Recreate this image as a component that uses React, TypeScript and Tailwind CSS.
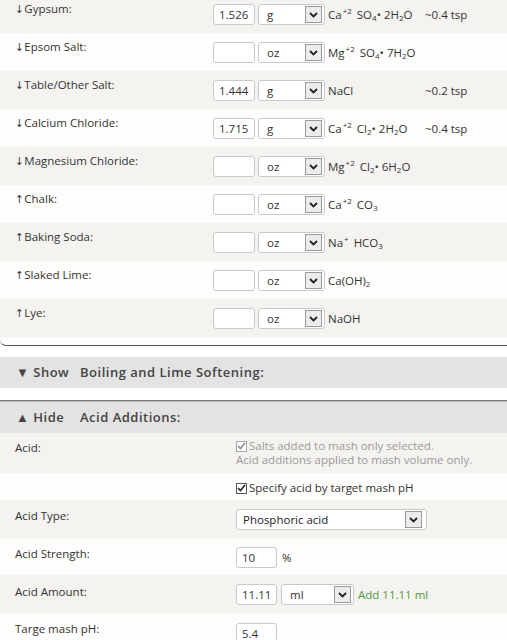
import React from "react";

const font = { fontFamily: '"Open Sans", "Liberation Sans", sans-serif' };

type Salt = {
  dir: string;
  name: string;
  amount: string;
  unit: string;
  formula: React.ReactNode;
  tsp?: string;
};

const Sup = ({ children }) => (
  <sup className="relative -top-[5px] ml-[1px] mr-[2px] text-[8px]">{children}</sup>
);
const Sub = ({ children }) => <sub className="relative top-[2px] align-baseline text-[8px]">{children}</sub>;

const salts: Salt[] = [
  { dir: "↓", name: "Gypsum:", amount: "1.526", unit: "g", formula: <>Ca<Sup>+2</Sup> SO<Sub>4</Sub>• 2H<Sub>2</Sub>O</>, tsp: "~0.4 tsp" },
  { dir: "↓", name: "Epsom Salt:", amount: "", unit: "oz", formula: <>Mg<Sup>+2</Sup> SO<Sub>4</Sub>• 7H<Sub>2</Sub>O</> },
  { dir: "↓", name: "Table/Other Salt:", amount: "1.444", unit: "g", formula: <>NaCl</>, tsp: "~0.2 tsp" },
  { dir: "↓", name: "Calcium Chloride:", amount: "1.715", unit: "g", formula: <>Ca<Sup>+2</Sup> Cl<Sub>2</Sub>• 2H<Sub>2</Sub>O</>, tsp: "~0.4 tsp" },
  { dir: "↓", name: "Magnesium Chloride:", amount: "", unit: "oz", formula: <>Mg<Sup>+2</Sup> Cl<Sub>2</Sub>• 6H<Sub>2</Sub>O</> },
  { dir: "↑", name: "Chalk:", amount: "", unit: "oz", formula: <>Ca<Sup>+2</Sup> CO<Sub>3</Sub></> },
  { dir: "↑", name: "Baking Soda:", amount: "", unit: "oz", formula: <>Na<Sup>+</Sup> HCO<Sub>3</Sub></> },
  { dir: "↑", name: "Slaked Lime:", amount: "", unit: "oz", formula: <>Ca(OH)<Sub>2</Sub></> },
  { dir: "↑", name: "Lye:", amount: "", unit: "oz", formula: <>NaOH</> },
];

const Chevron = () => (
  <span className="flex h-[17px] w-[17px] items-center justify-center border border-[#9a9a9a] bg-[#ececec]">
    <svg width="9" height="6" viewBox="0 0 9 6">
      <path d="M1 1 L4.5 4.5 L8 1" fill="none" stroke="#222" strokeWidth="1.8" />
    </svg>
  </span>
);

const TextBox = ({ value, w = "w-[42px]" }) => (
  <div className={`${w} flex h-[21px] items-center rounded-[3px] border border-[#c9c9c9] bg-white pl-[5px] text-[11.5px] text-[#333]`}>
    {value}
  </div>
);

const Select = ({ value, w = "w-[67px]" }) => (
  <div className={`${w} flex h-[21px] items-center justify-between rounded-[3px] border border-[#c9c9c9] bg-white pl-[8px] pr-[2px] text-[11.5px] text-[#333]`}>
    <span>{value}</span>
    <Chevron />
  </div>
);

const Check = ({ muted = false }) => (
  <span
    className={`inline-flex h-[11px] w-[11px] shrink-0 items-center justify-center border bg-white ${
      muted ? "border-[#a8a8a8]" : "border-[#555]"
    }`}
  >
    <svg width="9" height="8" viewBox="0 0 9 8">
      <path d="M1 4 L3.5 6.5 L8 1" fill="none" stroke={muted ? "#8a8a8a" : "#222"} strokeWidth="1.6" />
    </svg>
  </span>
);

const SectionHeader = ({ toggle, title }) => (
  <div className="flex h-[31px] items-center bg-[#e3e3e3] pl-[16px] text-[13px] font-semibold tracking-[0.5px] text-[#444]">
    <span className="w-[64px]">{toggle}</span>
    <span>{title}</span>
  </div>
);

const AcidRow = ({ label, shaded, h, labelTop, children }) => (
  <div className={`flex ${h} ${shaded ? "bg-[#f4f3f0]" : "bg-[#fdfdfb]"}`}>
    <div className={`w-[236px] pl-[15px] ${labelTop} text-[11.5px] leading-[17px] text-[#333]`}>{label}</div>
    <div className="flex-1">{children}</div>
  </div>
);

export default function App() {
  return (
    <div className="min-h-[640px] overflow-hidden bg-white" style={font}>
      <div className="-mt-[5px]">
        {salts.map((s, i) => (
          <div key={s.name} className={`flex h-[38px] ${i % 2 === 0 ? "bg-[#f4f3f0]" : "bg-[#fdfdfb]"}`}>
            <div className="w-[213px] pl-[15px] pt-[5px] text-[11.5px] leading-[17px] text-[#333]">
              <span className="mr-[1px] font-['DejaVu_Sans_Condensed',sans-serif] text-[11px]">{s.dir}</span>
              {s.name}
            </div>
            <div className="flex items-center gap-[3px] self-start pt-[9px]">
              <TextBox value={s.amount} />
              <Select value={s.unit} />
              <div className="w-[94px] text-[11.5px] leading-[17px] text-[#333]">{s.formula}</div>
              <div className="text-[11.5px] leading-[17px] text-[#333]">{s.tsp}</div>
            </div>
          </div>
        ))}
        <div className="h-[9px] rounded-bl-[6px] border-b border-[#555] bg-[#fcfcfa]" />
      </div>

      <div className="mt-[11px]">
        <SectionHeader toggle="▼ Show" title="Boiling and Lime Softening:" />
      </div>

      <div className="mt-[12px] border-t border-[#7a7a7a]">
        <div className="border-t border-[#b5b5b5]">
          <SectionHeader toggle="▲ Hide" title="Acid Additions:" />
        </div>
      </div>

      <AcidRow label="Acid:" shaded h="h-[40px]" labelTop="pt-[6px]">
        <div className="flex pt-[6px] text-[11.5px] leading-[14px] text-[#9a9a9a]">
          <div>
            <div className="flex items-center gap-[2px]">
              <Check muted />
              <span>Salts added to mash only selected.</span>
            </div>
            <div>Acid additions applied to mash volume only.</div>
          </div>
        </div>
      </AcidRow>

      <AcidRow label="" shaded={false} h="h-[27px]" labelTop="pt-[6px]">
        <div className="flex items-center gap-[2px] pt-[8px] text-[11.5px] leading-[14px] text-[#333]">
          <Check />
          <span>Specify acid by target mash pH</span>
        </div>
      </AcidRow>

      <AcidRow label="Acid Type:" shaded h="h-[39px]" labelTop="pt-[7px]">
        <div className="pt-[9px]">
          <div className="flex h-[21px] w-[191px] items-center justify-between rounded-[3px] border border-[#c9c9c9] bg-white pl-[6px] pr-[4px] text-[11.5px] text-[#222]">
            <span>Phosphoric acid</span>
            <Chevron />
          </div>
        </div>
      </AcidRow>

      <AcidRow label="Acid Strength:" shaded={false} h="h-[36px]" labelTop="pt-[6px]">
        <div className="flex items-center gap-[5px] pt-[8px]">
          <TextBox value="10" w="w-[41px]" />
          <span className="text-[11.5px] text-[#333]">%</span>
        </div>
      </AcidRow>

      <AcidRow label="Acid Amount:" shaded h="h-[38px]" labelTop="pt-[8px]">
        <div className="flex items-center gap-[4px] pt-[9px]">
          <TextBox value="11.11" w="w-[41px]" />
          <Select value="ml" w="w-[73px]" />
          <span className="text-[11.5px] text-[#4c9a3c]">Add 11.11 ml</span>
        </div>
      </AcidRow>

      <AcidRow label="Targe mash pH:" shaded={false} h="h-[38px]" labelTop="pt-[7px]">
        <div className="pt-[10px]">
          <TextBox value="5.4" w="w-[41px]" />
        </div>
      </AcidRow>
    </div>
  );
}
